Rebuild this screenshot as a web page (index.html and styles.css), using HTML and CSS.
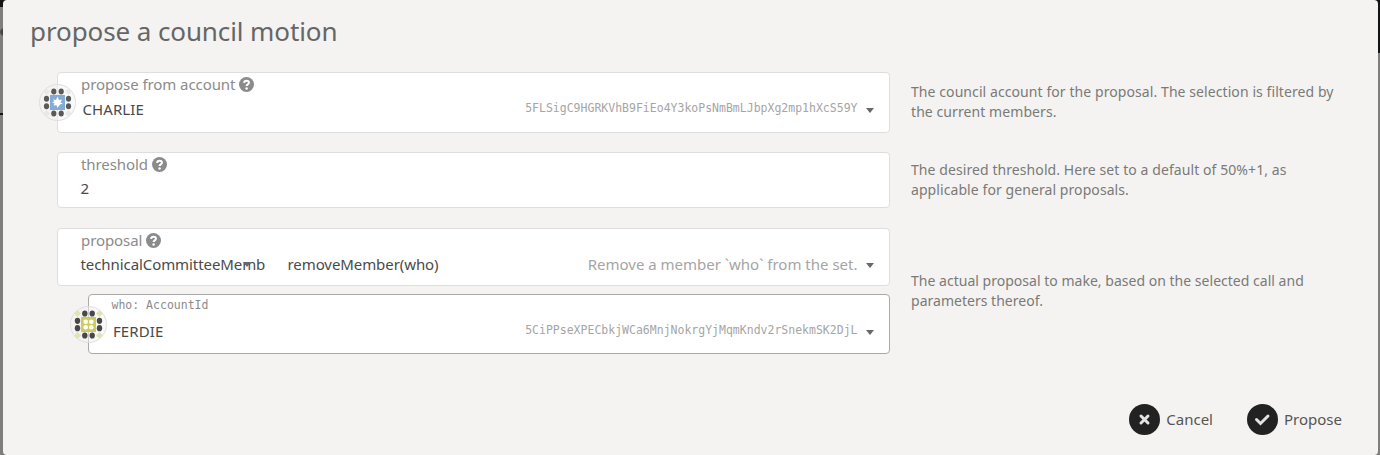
FILE: index.html
```html
<!DOCTYPE html>
<html lang="en">
<head>
<meta charset="utf-8">
<title>propose a council motion</title>
<link rel="stylesheet" href="styles.css">
</head>
<body>
<div class="backdrop-left"><i class="logo"></i></div>
<div class="backdrop-right"></div>
<main class="modal">
  <h1 class="title">propose a council motion</h1>
  <div class="rows">
    <div class="field from">
      <svg class="avatar" viewBox="-18.5 -18.5 37 37"><circle class="disc" r="18"/><g fill="#e8e8e8"><path d="M-14.5-11l3.5-3.5 3.5 3.5-3.5 3.5z"/><path d="M7.5-11l3.5-3.5 3.5 3.5-3.5 3.5z"/><path d="M-14.5 11l3.5-3.5 3.5 3.5-3.5 3.5z"/><path d="M7.5 11l3.5-3.5 3.5 3.5-3.5 3.5z"/></g><g fill="#595959"><ellipse cx="-3.7" cy="-11" rx="2.6" ry="3"/><ellipse cx="3.7" cy="-11" rx="2.6" ry="3"/><ellipse cx="-3.7" cy="11" rx="2.6" ry="3"/><ellipse cx="3.7" cy="11" rx="2.6" ry="3"/><ellipse cx="-11" cy="-3.7" rx="2.6" ry="3"/><ellipse cx="-11" cy="3.7" rx="2.6" ry="3"/><ellipse cx="11" cy="-3.7" rx="2.6" ry="3"/><ellipse cx="11" cy="3.7" rx="2.6" ry="3"/></g><rect x="-7.5" y="-7.5" width="15" height="15" fill="#84aad6"/><path fill="#fff" d="M-4.500-3L-1.500-2.500 0-6 1.500-2.500 4.500-3 3 0 5.500 1 2.500 2 0 5.500-1 2.800-4 3-3 1-5.500-.5-3-1z"/></svg>
      <div class="label">propose from account<svg class="help" viewBox="0 0 16 16"><circle cx="8" cy="8" r="8"/><path d="M5.4 6.2C5.7 3.2 10.6 3.2 10.6 6c0 1.9-2.5 1.8-2.5 3.6"/><circle class="dot" cx="8.1" cy="12.2" r="1.3"/></svg></div>
      <div class="value"><span class="name">CHARLIE</span><span class="addr">5FLSigC9HGRKVhB9FiEo4Y3koPsNmBmLJbpXg2mp1hXcS59Y</span><i class="caret"></i></div>
    </div>
    <p class="hint hint-from">The council account for the proposal. The selection is filtered by<br>the current members.</p>

    <div class="field threshold">
      <div class="label">threshold<svg class="help" viewBox="0 0 16 16"><circle cx="8" cy="8" r="8"/><path d="M5.4 6.2C5.7 3.2 10.6 3.2 10.6 6c0 1.9-2.5 1.8-2.5 3.6"/><circle class="dot" cx="8.1" cy="12.2" r="1.3"/></svg></div>
      <div class="value">2</div>
    </div>
    <p class="hint hint-threshold">The desired threshold. Here set to a default of 50%+1, as<br>applicable for general proposals.</p>

    <div class="proposal-group">
      <div class="field proposal">
        <div class="label">proposal<svg class="help" viewBox="0 0 16 16"><circle cx="8" cy="8" r="8"/><path d="M5.4 6.2C5.7 3.2 10.6 3.2 10.6 6c0 1.9-2.5 1.8-2.5 3.6"/><circle class="dot" cx="8.1" cy="12.2" r="1.3"/></svg></div>
        <div class="value"><span class="section">technicalCommitteeMemb<i class="caret over"></i></span><span>removeMember(who)</span><span class="desc">Remove a member `who` from the set.</span><i class="caret"></i></div>
      </div>
      <div class="field who">
        <svg class="avatar" viewBox="-18.5 -18.5 37 37"><circle class="disc" r="18"/><g fill="#e2e4ac"><path d="M-14.5-11l3.5-3.5 3.5 3.5-3.5 3.5z"/><path d="M7.5-11l3.5-3.5 3.5 3.5-3.5 3.5z"/><path d="M-14.5 11l3.5-3.5 3.5 3.5-3.5 3.5z"/><path d="M7.5 11l3.5-3.5 3.5 3.5-3.5 3.5z"/></g><g fill="#484848"><ellipse cx="-3.7" cy="-11" rx="2.7" ry="3.1"/><ellipse cx="3.7" cy="-11" rx="2.7" ry="3.1"/><ellipse cx="-3.7" cy="11" rx="2.7" ry="3.1"/><ellipse cx="3.7" cy="11" rx="2.7" ry="3.1"/><ellipse cx="-11" cy="-3.7" rx="2.7" ry="3.1"/><ellipse cx="-11" cy="3.7" rx="2.7" ry="3.1"/><ellipse cx="11" cy="-3.7" rx="2.7" ry="3.1"/><ellipse cx="11" cy="3.7" rx="2.7" ry="3.1"/></g><rect x="-7.5" y="-7.5" width="15" height="15" fill="#cccb5c"/><g fill="#fff"><circle cx="-2.8" cy="-2.8" r="2.3"/><circle cx="2.8" cy="-2.8" r="2.3"/><circle cx="-2.8" cy="2.8" r="2.3"/><circle cx="2.8" cy="2.8" r="2.3"/></g></svg>
        <div class="label mono">who: AccountId</div>
        <div class="value"><span class="name">FERDIE</span><span class="addr">5CiPPseXPECbkjWCa6MnjNokrgYjMqmKndv2rSnekmSK2DjL</span><i class="caret"></i></div>
      </div>
    </div>
    <p class="hint hint-proposal">The actual proposal to make, based on the selected call and<br>parameters thereof.</p>
  </div>
  <div class="actions">
    <button class="action"><svg viewBox="0 0 31 31"><circle cx="15.5" cy="15.5" r="15.5"/><path d="M12 12l7 7M19 12l-7 7"/></svg>Cancel</button>
    <button class="action"><svg viewBox="0 0 31 31"><circle cx="15.5" cy="15.5" r="15.5"/><path d="M9.5 15.5l4 4 7.5-7.5"/></svg>Propose</button>
  </div>
</main>
</body>
</html>
```
FILE: styles.css
```css
* { box-sizing: border-box; }
body {
  margin: 0;
  height: 455px;
  overflow: hidden;
  background: #7f7e7d;
  color: #4a4a4a;
  font: 15px/20px "Noto Sans", sans-serif;
}
.backdrop-left, .backdrop-right { position: absolute; top: 0; background: #141414; }
.backdrop-left { left: 0; width: 12px; height: 7px; }
.backdrop-left::after { content: ""; position: absolute; top: 113px; width: 12px; height: 2px; background: #141414; }
.logo {
  position: absolute;
  left: 0;
  top: 28px;
  width: 8px;
  height: 8px;
  border: 1px solid #6b4a30;
  border-radius: 4px;
  background: #2b4a60;
}
.backdrop-right { right: 0; width: 12px; height: 53px; }
.modal {
  position: relative;
  height: 455px;
  margin: 0 2px 0 3px;
  border-radius: 4px;
  background: #f4f3f1;
}
.title {
  margin: 0;
  padding: 13px 0 0 27px;
  height: 72px;
  color: #666;
  font-size: 26px;
  font-weight: 400;
  line-height: 36px;
  letter-spacing: -0.1px;
}
.rows {
  display: grid;
  grid-template-columns: 833px 440px;
  grid-template-rows: 61px 57px auto;
  column-gap: 21px;
  row-gap: 19px;
  margin-left: 54px;
  align-items: start;
}
.field {
  position: relative;
  border: 1px solid #dededf;
  border-radius: 4px;
  background: #fff;
  padding: 1px 15.5px 0 23px;
  letter-spacing: -0.08px;
}
.from { height: 61px; }
.threshold { height: 56px; }
.proposal { height: 58px; }
.who { height: 60px; margin: 8px 0 0 31px; border-color: #a9a9a9; padding-top: 0; padding-left: 22.5px; }
.avatar { position: absolute; left: -19px; top: 11px; width: 37px; height: 37px; }
.disc { fill: rgba(243, 243, 243, .5); stroke: #dedede; }
.label { display: flex; align-items: center; height: 20px; color: #8b8b8b; }
.help { width: 15px; height: 15px; margin-left: 4px; fill: #8b8b8b; }
.help path { fill: none; stroke: #fff; stroke-width: 2.2; }
.help .dot { fill: #fff; }
.value { display: flex; align-items: center; height: 20px; margin-top: 4px; margin-left: -.5px; }
.from .value { margin-top: 5px; }
.who .value { margin-top: 6px; }
.name { margin-left: 2px; letter-spacing: .08px; }
.mono, .addr { font-family: "DejaVu Sans Mono", monospace; font-size: 11.5px; letter-spacing: 0; }
.addr, .desc { margin-left: auto; color: #a5a5a5; }
.desc { letter-spacing: 0; }
.addr { padding-bottom: 2px; }
.caret {
  width: 0;
  margin: 2px 0 0 8px;
  border: 4px solid transparent;
  border-top: 5px solid #686868;
  border-bottom: 0;
}
.section { position: relative; width: 207px; }
.over { position: absolute; left: 162px; top: 8px; margin: 0; }
.hint { margin: 0; color: #7a7a78; font-size: 14px; line-height: 20px; letter-spacing: .08px; }
.hint-from { padding-top: 10px; }
.hint-threshold { padding-top: 8px; }
.hint-proposal { padding-top: 43px; letter-spacing: .02px; }
.actions { display: flex; justify-content: flex-end; gap: 34px; padding: 50px 36px 0 0; }
.action {
  display: flex;
  align-items: center;
  gap: 6px;
  height: 31px;
  padding: 0 0 1px;
  border: 0;
  background: none;
  color: #555;
  font: 15px/20px "Noto Sans", sans-serif;
}
.action svg { width: 31px; height: 31px; fill: #222; }
.action path { fill: none; stroke: #e4e4e4; stroke-width: 3; stroke-linecap: round; }
```
